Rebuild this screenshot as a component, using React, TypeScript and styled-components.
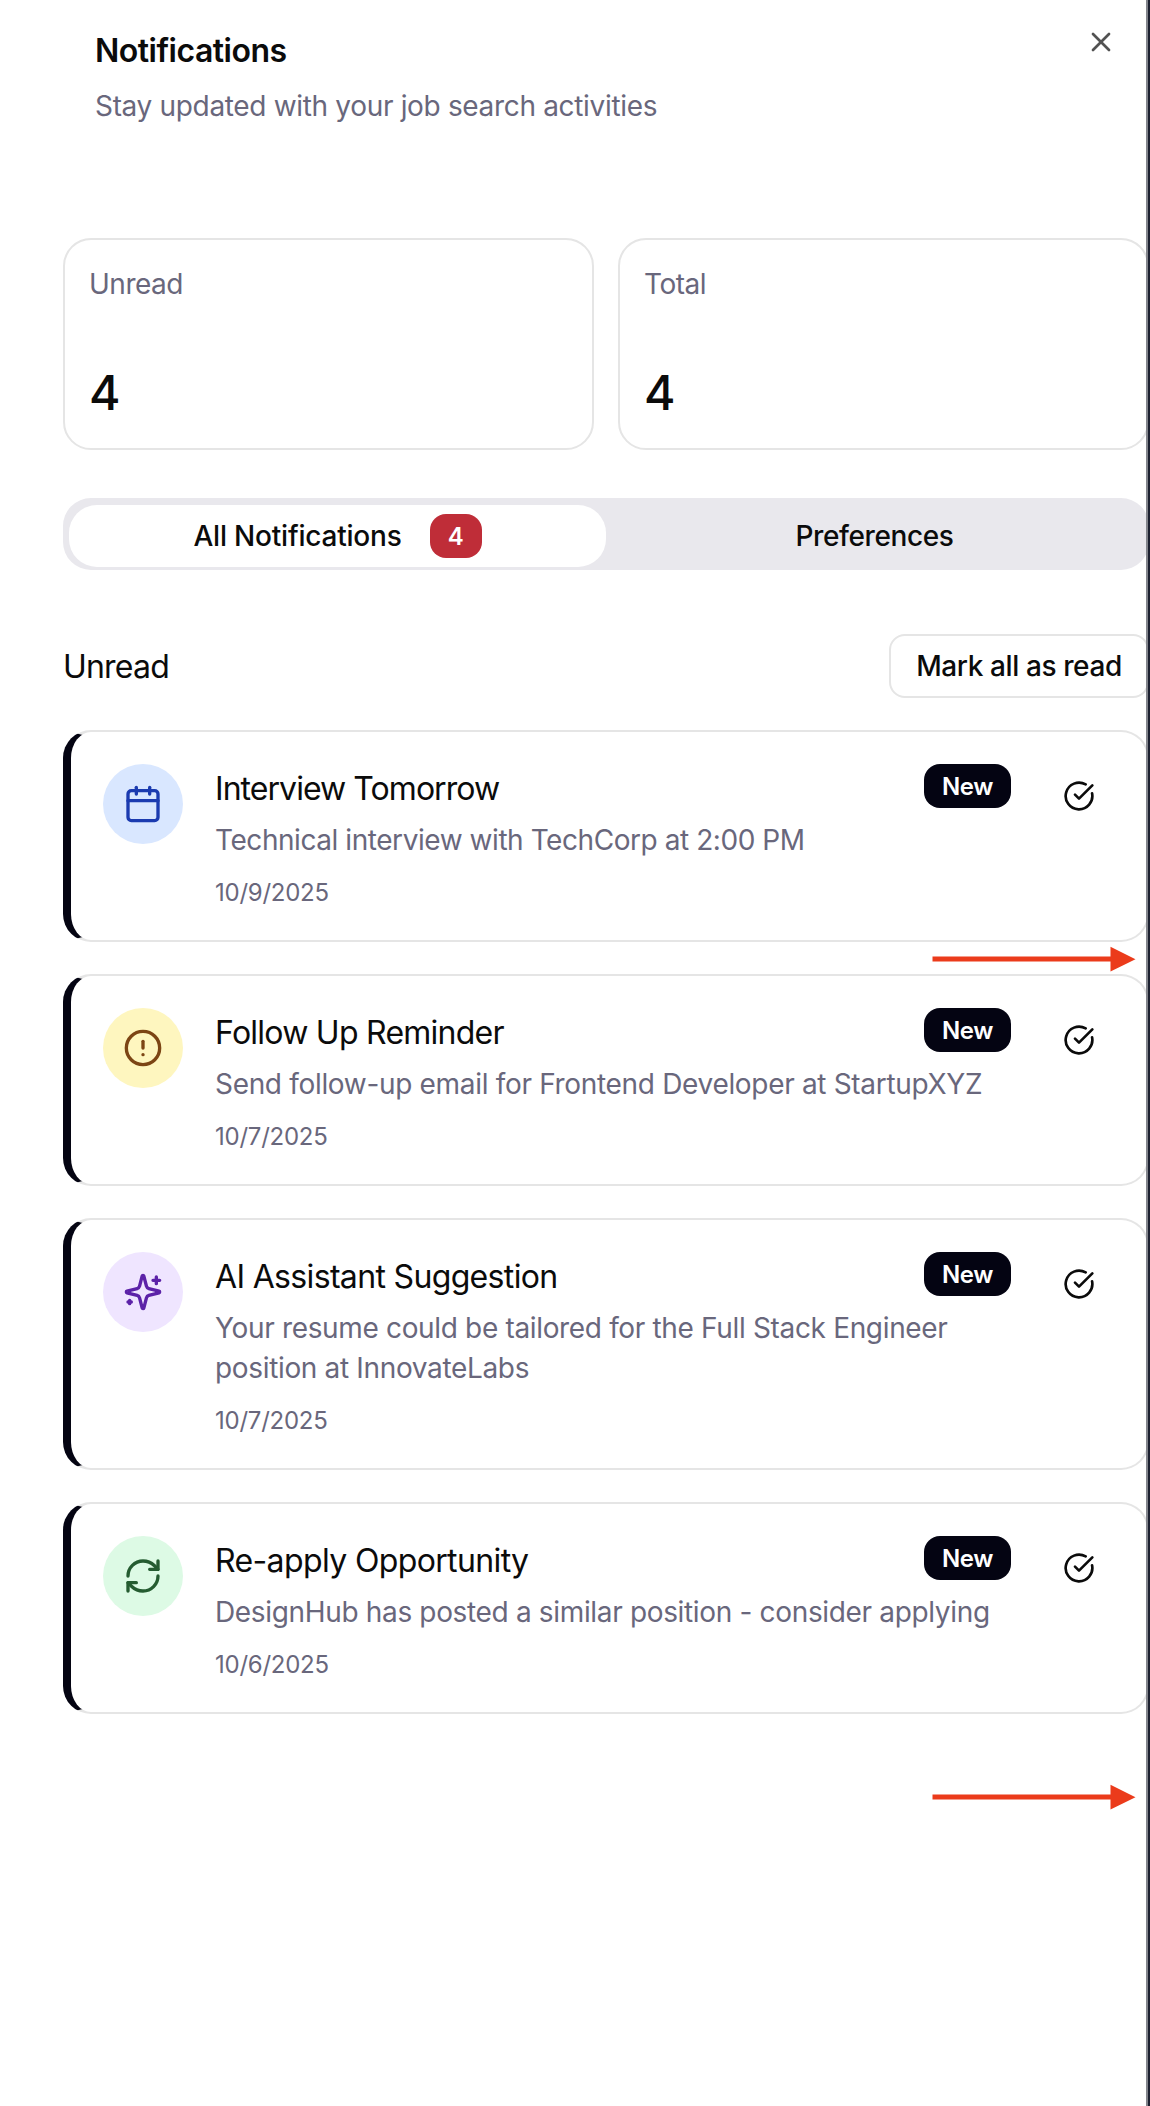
import React from "react";
import styled, { createGlobalStyle } from "styled-components";
import { Calendar, CircleAlert, CircleCheckBig, RefreshCw, X } from "lucide-react";

const GlobalStyle = createGlobalStyle`
  *, *::before, *::after { box-sizing: border-box; }
  body {
    margin: 0;
    background: #fff;
    color: #0b0b0b;
    font-family: Inter, "Liberation Sans", sans-serif;
    font-size: 28px;
    line-height: 40px;
    overflow: hidden;
  }
  h2, h3, h4, p { margin: 0; font-weight: 400; }
  button { font: inherit; color: inherit; background: none; border: 0; padding: 0; cursor: pointer; }
`;

const Page = styled.div`
  position: relative;
  display: flex;
  width: 1150px;
  height: 2106px;
  background: #1c2030;
`;

const Panel = styled.section`
  width: 1148px;
  height: 100%;
  flex: none;
  overflow: hidden;
  background: #fff;
  border-right: 2px solid #83858c;
`;

const Header = styled.header`
  display: flex;
  justify-content: space-between;
  height: 238px;
  padding: 26px 29px 0 95px;
`;

const Title = styled.h2`
  font-size: 32px;
  line-height: 50px;
  font-weight: 600;
  letter-spacing: -0.5px;
`;

const Subtitle = styled.p`
  margin-top: 10px;
  color: #69677c;
  letter-spacing: -0.33px;
`;

const CloseButton = styled.button`
  display: flex;
  width: 32px;
  height: 32px;
  color: #525252;
`;

const Content = styled.div`
  width: 1086px;
  margin-left: 63px;
`;

const Stats = styled.div`
  display: grid;
  grid-template-columns: 1fr 1fr;
  gap: 24px;
`;

const StatCard = styled.div`
  display: flex;
  flex-direction: column;
  justify-content: space-between;
  height: 212px;
  padding: 24px 24px 23px;
  border: 2px solid #e5e5e5;
  border-radius: 28px;
`;

const StatLabel = styled.div`
  color: #69677c;
  letter-spacing: -0.5px;
`;

const StatValue = styled.div`
  font-size: 48px;
  line-height: 64px;
  font-weight: 450;
`;

const TabList = styled.div`
  display: flex;
  height: 72px;
  margin-top: 48px;
  padding: 7px 6px 3px;
  border-radius: 28px;
  background: #e9e8ed;
`;

const Tab = styled.button<{ $active?: boolean }>`
  display: flex;
  flex: 1;
  align-items: center;
  justify-content: center;
  border-radius: 28px;
  background: ${(p) => (p.$active ? "#fff" : "transparent")};
  font-weight: 500;
  letter-spacing: ${(p) => (p.$active ? "-0.2px" : "-0.4px")};
`;

const Badge = styled.span<{ $tone: "danger" | "dark" }>`
  display: flex;
  flex: none;
  align-items: center;
  justify-content: center;
  width: ${(p) => (p.$tone === "danger" ? "52px" : "87px")};
  height: 44px;
  margin-left: ${(p) => (p.$tone === "danger" ? "28px" : "16px")};
  padding-top: 1px;
  border-radius: 16px;
  background: ${(p) => (p.$tone === "danger" ? "#bf2d38" : "#040412")};
  color: #fff;
  font-size: 24px;
  line-height: 32px;
  font-weight: 600;
  letter-spacing: -0.4px;
`;

const SectionBar = styled.div`
  display: flex;
  align-items: center;
  justify-content: space-between;
  height: 64px;
  margin: 64px 0 32px;
`;

const SectionTitle = styled.h3`
  padding-top: 2px;
  font-size: 32px;
  line-height: 48px;
  letter-spacing: -0.8px;
`;

const OutlineButton = styled.button`
  width: 260px;
  height: 64px;
  border: 2px solid #e5e5e5;
  border-radius: 16px;
  font-weight: 500;
  letter-spacing: -0.4px;
  white-space: nowrap;
`;

const List = styled.div`
  display: flex;
  flex-direction: column;
  gap: 32px;
`;

const Card = styled.article`
  display: flex;
  align-items: flex-start;
  padding: 32px;
  border: 2px solid #e5e5e5;
  border-left: 8px solid #040412;
  border-radius: 28px;
`;

const IconDisc = styled.div<{ $bg: string; $fg: string }>`
  display: flex;
  flex: none;
  align-items: center;
  justify-content: center;
  width: 80px;
  height: 80px;
  border-radius: 50%;
  background: ${(p) => p.$bg};
  color: ${(p) => p.$fg};
`;

const CardBody = styled.div`
  flex: 1;
  min-width: 0;
  margin: 0 32px;
`;

const CardTop = styled.div`
  display: flex;
  align-items: flex-start;
  justify-content: space-between;
  height: 56px;
`;

const CardTitle = styled.h4<{ $tracking: number }>`
  padding-top: 1px;
  font-size: 32px;
  line-height: 48px;
  letter-spacing: ${(p) => p.$tracking}px;
`;

const CardText = styled.p<{ $tracking: number }>`
  color: #69677c;
  letter-spacing: ${(p) => p.$tracking}px;
`;

const CardDate = styled.p`
  padding-top: 17px;
  margin-bottom: -1px;
  color: #69677c;
  font-size: 24px;
  line-height: 32px;
  letter-spacing: -0.25px;
`;

const ReadButton = styled.button`
  display: flex;
  flex: none;
  align-items: center;
  justify-content: center;
  width: 72px;
  height: 64px;
`;

const Arrow = styled.svg<{ $top: number }>`
  position: absolute;
  top: ${(p) => p.$top}px;
  left: 932px;
  width: 204px;
  height: 26px;
  fill: #eb3b1b;
`;

function Sparkles() {
  return (
    <svg width="40" height="40" viewBox="0 0 24 24" fill="none" stroke="currentColor" strokeWidth="2" strokeLinecap="round" strokeLinejoin="round">
      <path d="M9.937 15.5A2 2 0 0 0 8.5 14.063l-6.135-1.582a.5.5 0 0 1 0-.962L8.5 9.936A2 2 0 0 0 9.937 8.5l1.582-6.135a.5.5 0 0 1 .963 0L14.063 8.5A2 2 0 0 0 15.5 9.937l6.135 1.581a.5.5 0 0 1 0 .964L15.5 14.063a2 2 0 0 0-1.437 1.437l-1.582 6.135a.5.5 0 0 1-.963 0z" />
      <path d="M20 3v4M22 5h-4M4 17v2M5 18H3" />
    </svg>
  );
}

const notifications = [
  { title: "Interview Tomorrow", titleTracking: -0.95, text: "Technical interview with TechCorp at 2:00 PM", textTracking: -0.44, date: "10/9/2025", bg: "#d9e7ff", fg: "#1b3bb0", icon: <Calendar size={40} /> },
  { title: "Follow Up Reminder", titleTracking: -0.75, text: "Send follow-up email for Frontend Developer at StartupXYZ", textTracking: -0.32, date: "10/7/2025", bg: "#fef6bf", fg: "#7c4514", icon: <CircleAlert size={40} /> },
  { title: "AI Assistant Suggestion", titleTracking: -0.66, text: "Your resume could be tailored for the Full Stack Engineer position at InnovateLabs", textTracking: -0.34, date: "10/7/2025", bg: "#efe5ff", fg: "#5c22a8", icon: <Sparkles /> },
  { title: "Re-apply Opportunity", titleTracking: -0.63, text: "DesignHub has posted a similar position - consider applying", textTracking: -0.34, date: "10/6/2025", bg: "#ddfae5", fg: "#255c31", icon: <RefreshCw size={40} /> },
];

export default function App() {
  return (
    <Page>
      <GlobalStyle />
      <Panel>
        <Header>
          <div>
            <Title>Notifications</Title>
            <Subtitle>Stay updated with your job search activities</Subtitle>
          </div>
          <CloseButton aria-label="Close">
            <X size={32} />
          </CloseButton>
        </Header>
        <Content>
          <Stats>
            <StatCard>
              <StatLabel>Unread</StatLabel>
              <StatValue>4</StatValue>
            </StatCard>
            <StatCard>
              <StatLabel>Total</StatLabel>
              <StatValue>4</StatValue>
            </StatCard>
          </Stats>
          <TabList>
            <Tab $active>
              All Notifications
              <Badge $tone="danger">4</Badge>
            </Tab>
            <Tab>Preferences</Tab>
          </TabList>
          <SectionBar>
            <SectionTitle>Unread</SectionTitle>
            <OutlineButton>Mark all as read</OutlineButton>
          </SectionBar>
          <List>
            {notifications.map((n) => (
              <Card key={n.title}>
                <IconDisc $bg={n.bg} $fg={n.fg}>{n.icon}</IconDisc>
                <CardBody>
                  <CardTop>
                    <CardTitle $tracking={n.titleTracking}>{n.title}</CardTitle>
                    <Badge $tone="dark">New</Badge>
                  </CardTop>
                  <CardText $tracking={n.textTracking}>{n.text}</CardText>
                  <CardDate>{n.date}</CardDate>
                </CardBody>
                <ReadButton aria-label="Mark as read">
                  <CircleCheckBig size={32} />
                </ReadButton>
              </Card>
            ))}
          </List>
        </Content>
      </Panel>
      <Arrow $top={946} viewBox="0 0 204 26">
        <path d="M0.5 10.5H178.5V0.8L203.5 13.2L178.5 25.5V15.5H0.5Z" />
      </Arrow>
      <Arrow $top={1784} viewBox="0 0 204 26">
        <path d="M0.5 10.5H178.5V0.8L203.5 13.2L178.5 25.5V15.5H0.5Z" />
      </Arrow>
    </Page>
  );
}
